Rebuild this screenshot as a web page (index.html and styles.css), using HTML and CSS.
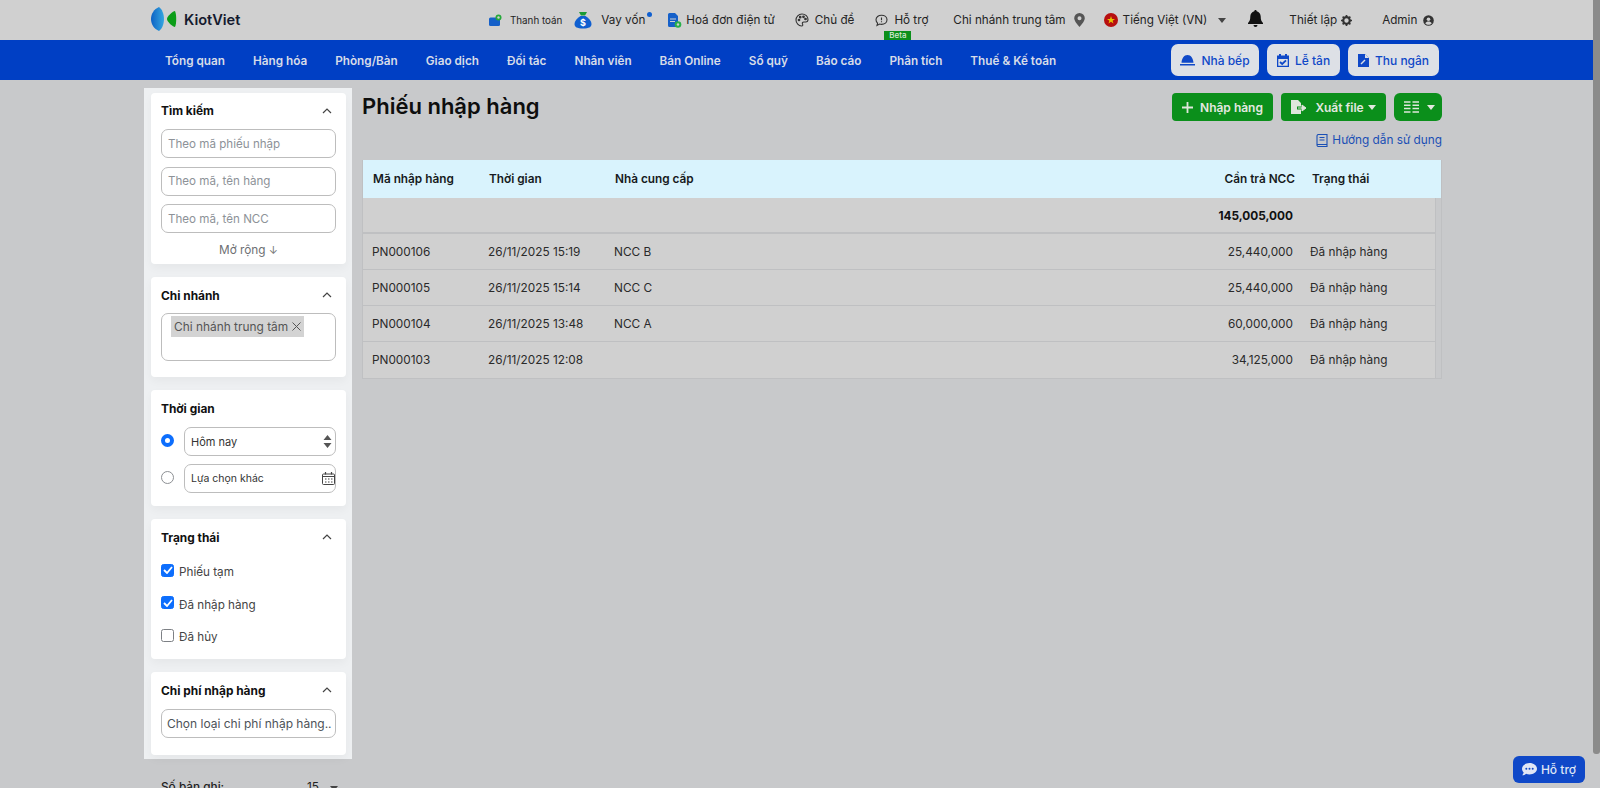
FILE: index.html
```html
<!DOCTYPE html>
<html lang="vi">
<head>
<meta charset="utf-8">
<title>Phiếu nhập hàng</title>
<link rel="stylesheet" href="styles.css">
</head>
<body>
<div class="app">
  <header class="topbar">
    <div class="shell topbar-in">
      <a class="logo">
        <svg width="26" height="26" viewBox="0 0 26 26"><defs><linearGradient id="lg" x1="0" x2="1" y1="0" y2="0"><stop offset="0" stop-color="#0d62c4"/><stop offset="1" stop-color="#35a6e0"/></linearGradient></defs><path d="M8 1C3 3 0 8 0 13s3 10 8 12c3-2 5-7 5-12S11 3 8 1z" fill="url(#lg)"/><path d="M24 5c-1.800 0-8 5-8 8s6.200 8 8 8c1-2 1.200-5 1.200-8s-.2-6-1.200-8z" fill="#0b9d18"/></svg>
        <span>KiotViet</span>
      </a>
      <nav class="tools">
        <a class="tool t-pay"><svg width="13" height="13" viewBox="0 0 13 13"><rect x="0" y="3.500" width="11" height="8.500" rx="1.500" fill="#1560c9"/><circle cx="9.500" cy="3.500" r="3" fill="#26a83a"/><circle cx="9.500" cy="3.500" r="1.200" fill="#d0d0d0"/></svg><span class="small">Thanh toán</span></a>
        <a class="tool t-loan"><svg width="18" height="18" viewBox="0 0 18 18"><path d="M5 1h8l-2 3.500H7z" fill="#1a9b35"/><path d="M6.500 5h5C15 7 17.500 10 17.500 13c0 3-2.500 4.500-8.500 4.500S.5 16 .5 13c0-3 2.500-6 6-8z" fill="#0f5fd0"/><text x="9" y="14.500" text-anchor="middle" class="dollar">$</text></svg><span>Vay vốn</span><i class="dot"></i></a>
        <a class="tool t-inv"><svg width="15" height="15" viewBox="0 0 15 15"><path d="M1 1.500A1.500 1.500 0 0 1 2.500 0H8l3 3v11H2.500A1.500 1.500 0 0 1 1 12.500z" fill="#1560c9"/><path d="M3 6h6M3 8.500h5" stroke="#d0d0d0"/><circle cx="11" cy="11.500" r="3.300" fill="#28b04a"/><circle cx="11" cy="11.500" r="1.200" fill="#d0d0d0"/></svg><span>Hoá đơn điện tử</span></a>
        <a class="tool t-theme"><svg width="14" height="14" viewBox="0 0 14 14" fill="none" stroke="#333" stroke-width="1.100"><path d="M7 1C3.500 1 1 3.700 1 7s2.700 6 5.500 6c1.500 0 1.500-1 1-2-.5-1 0-2 1.300-2h2C12.200 9 13 8 13 6.500 13 3.500 10.500 1 7 1z"/><circle cx="4" cy="7" r=".8" fill="#333"/><circle cx="5.200" cy="4.200" r=".8" fill="#333"/><circle cx="8.500" cy="3.800" r=".8" fill="#333"/><circle cx="10.500" cy="6" r=".8" fill="#333"/></svg><span>Chủ đề</span></a>
        <a class="tool t-help"><svg width="13" height="13" viewBox="0 0 13 13" fill="none" stroke="#333" stroke-width="1.100"><path d="M6.500 1.200c3.100 0 5.500 2 5.500 4.600s-2.400 4.600-5.500 4.600c-.7 0-1.300-.1-1.900-.3L2 11.500l.6-2.300C1.600 8.300 1 7.100 1 5.800c0-2.600 2.400-4.600 5.500-4.600z"/><path d="M6.500 3.500v2.800M6.500 7.300v.9"/></svg><span>Hỗ trợ</span><b class="beta">Beta</b></a>
        <a class="tool t-branch"><span>Chi nhánh trung tâm</span><svg width="11" height="14" viewBox="0 0 11 14"><path fill-rule="evenodd" d="M5.500 0A5.300 5.300 0 0 0 .2 5.300C.2 8.500 5.500 14 5.500 14s5.300-5.500 5.300-8.700A5.300 5.300 0 0 0 5.500 0zm0 7.300a2 2 0 1 1 0-4 2 2 0 0 1 0 4z" fill="#555"/></svg></a>
        <a class="tool t-lang"><svg width="14" height="14" viewBox="0 0 14 14"><circle cx="7" cy="7" r="7" fill="#b70f0f"/><path d="M7 3l1 2.900h3L8.600 7.700l.9 2.900L7 8.800l-2.500 1.800.9-2.900L3 5.900h3z" fill="#e8c200"/></svg><span>Tiếng Việt (VN)</span><i class="caret dark"></i></a>
        <a class="tool t-bell"><svg width="15" height="17" viewBox="0 0 15 17"><path d="M7.500 0C6.700 0 6.300.6 6.300 1.300 3.800 1.900 2.300 4 2.300 6.500c0 3.500-.8 4.800-2.300 6.500v1h15v-1c-1.500-1.700-2.300-3-2.300-6.500 0-2.500-1.500-4.600-4-5.200C8.700.6 8.300 0 7.500 0zM5.500 15a2 2 0 0 0 4 0z" fill="#111"/></svg></a>
        <a class="tool t-set"><span>Thiết lập</span><svg width="11" height="11" viewBox="0 0 10 10"><circle cx="5" cy="5" r="3" fill="none" stroke="#333" stroke-width="2"/><path d="M5 0v2M5 8v2M0 5h2M8 5h2M1.500 1.500l1.300 1.300M7.200 7.200l1.300 1.300M8.500 1.500L7.200 2.800M2.800 7.200L1.500 8.500" stroke="#333" stroke-width="1.500"/></svg></a>
        <a class="tool t-admin"><span>Admin</span><svg width="11" height="11" viewBox="0 0 11 11"><circle cx="5.500" cy="5.500" r="5.300" fill="#333"/><circle cx="5.500" cy="4.200" r="1.800" fill="#d0d0d0"/><path d="M2.300 8.500c.6-1.300 1.800-1.900 3.200-1.900s2.600.6 3.200 1.900c-.8.800-2 1.300-3.200 1.300s-2.400-.5-3.200-1.300z" fill="#d0d0d0"/></svg></a>
      </nav>
    </div>
  </header>

  <div class="navbar">
    <div class="shell navbar-in">
      <ul class="menu">
        <li>Tổng quan</li><li>Hàng hóa</li><li>Phòng/Bàn</li><li>Giao dịch</li><li>Đối tác</li><li>Nhân viên</li><li>Bán Online</li><li>Sổ quỹ</li><li>Báo cáo</li><li>Phân tích</li><li>Thuế &amp; Kế toán</li>
      </ul>
      <div class="quick">
        <a class="qbtn q1"><svg width="15" height="11" viewBox="0 0 15 11"><path d="M7.500 0C4 0 1.800 3.500 1.500 7.800h12C13.200 3.500 11 0 7.500 0zM0 9h15v1.600H0z" fill="#0f48c8"/></svg>Nhà bếp</a>
        <a class="qbtn q2"><svg width="12" height="13" viewBox="0 0 12 13"><path d="M2 0h2v1.500h4V0h2v1.500h2V13H0V1.500h2zM1.300 5v6.700h9.400V5z" fill="#0f48c8" fill-rule="evenodd"/><path d="M3 8l2.200 2L9 6.300" stroke="#0f48c8" stroke-width="1.800" fill="none"/></svg>Lễ tân</a>
        <a class="qbtn q3"><svg width="11" height="13" viewBox="0 0 11 13"><path d="M0 0h7l4 4v9H0z" fill="#0f48c8"/><path d="M7 0l4 4H7z" fill="#dde0e6"/><path d="M3 10l4-4" stroke="#dde0e6" stroke-width="1.500"/></svg>Thu ngân</a>
      </div>
    </div>
  </div>

  <div class="shell content">
    <aside class="side">
      <div class="side-panel">
        <section class="card c-search">
          <header class="card-h"><h3>Tìm kiếm</h3><svg class="chev" width="10" height="6" viewBox="0 0 10 6"><path d="M1 5l4-4 4 4" fill="none" stroke="#444" stroke-width="1.200"/></svg></header>
          <div class="stack">
            <div class="field ph">Theo mã phiếu nhập</div>
            <div class="field ph">Theo mã, tên hàng</div>
            <div class="field ph">Theo mã, tên NCC</div>
          </div>
          <div class="more">Mở rộng <span class="arr">↓</span></div>
        </section>
        <section class="card c-branch">
          <header class="card-h"><h3>Chi nhánh</h3><svg class="chev" width="10" height="6" viewBox="0 0 10 6"><path d="M1 5l4-4 4 4" fill="none" stroke="#444" stroke-width="1.200"/></svg></header>
          <div class="tagbox"><span class="tag">Chi nhánh trung tâm <svg width="9" height="9" viewBox="0 0 9 9"><path d="M.5.5l8 8M8.500.5l-8 8" stroke="#555" stroke-width="1"/></svg></span></div>
        </section>
        <section class="card c-time">
          <header class="card-h"><h3>Thời gian</h3></header>
          <div class="radio-row"><i class="radio on"></i><div class="field sel"><span>Hôm nay</span><svg width="9" height="13" viewBox="0 0 9 13"><path d="M4.500 0l4 5H.5zM4.500 13l-4-5h8z" fill="#555"/></svg></div></div>
          <div class="radio-row r2"><i class="radio"></i><div class="field sel s2"><span>Lựa chọn khác</span><svg width="13" height="13" viewBox="0 0 13 13" fill="none" stroke="#444"><rect x=".5" y="2" width="12" height="10.500" rx="1"/><path d="M.5 4.500h12M3.500 0v2.500M9.500 0v2.500" stroke-width="1.200"/><path d="M3 7h1.500M6 7h1.500M9 7h1.500M3 10h1.500M6 10h1.500M9 10h1.500"/></svg></div></div>
        </section>
        <section class="card c-status">
          <header class="card-h"><h3>Trạng thái</h3><svg class="chev" width="10" height="6" viewBox="0 0 10 6"><path d="M1 5l4-4 4 4" fill="none" stroke="#444" stroke-width="1.200"/></svg></header>
          <label class="chk"><i class="box on"><svg width="10" height="8" viewBox="0 0 10 8"><path d="M1 4l3 3 5-6" fill="none" stroke="#fff" stroke-width="1.800"/></svg></i>Phiếu tạm</label>
          <label class="chk"><i class="box on"><svg width="10" height="8" viewBox="0 0 10 8"><path d="M1 4l3 3 5-6" fill="none" stroke="#fff" stroke-width="1.800"/></svg></i>Đã nhập hàng</label>
          <label class="chk"><i class="box"></i>Đã hủy</label>
        </section>
        <section class="card c-cost">
          <header class="card-h"><h3>Chi phí nhập hàng</h3><svg class="chev" width="10" height="6" viewBox="0 0 10 6"><path d="M1 5l4-4 4 4" fill="none" stroke="#444" stroke-width="1.200"/></svg></header>
          <div class="field cost">Chọn loại chi phí nhập hàng..</div>
        </section>
      </div>
      <div class="pager"><b>Số bản ghi:</b><span class="pg-r">15<i class="pgcaret"></i></span></div>
    </aside>

    <main class="main">
      <div class="head">
        <h1>Phiếu nhập hàng</h1>
        <div class="actions">
          <div class="btns">
            <a class="btn b-add"><svg width="11" height="11" viewBox="0 0 11 11"><path d="M5.500 0v11M0 5.500h11" stroke="#dfe6dc" stroke-width="1.800"/></svg>Nhập hàng</a>
            <a class="btn b-exp"><svg class="exp-ic" width="16" height="14" viewBox="0 0 16 14"><path d="M0 0h7l3 3v3.500H6v3h4V14H0z" fill="#dfe6dc"/><path d="M7 8h6M11 5l4 3-4 3z" stroke="#dfe6dc" fill="#dfe6dc"/></svg>Xuất file<i class="caret"></i></a>
            <a class="btn b-grid"><svg width="15" height="12" viewBox="0 0 15 12"><path d="M0 1h6.500M8.500 1H15M0 4.300h6.500M8.500 4.300H15M0 7.600h6.500M8.500 7.600H15M0 11h6.500M8.500 11H15" stroke="#dfe6dc" stroke-width="1.500"/></svg><i class="caret"></i></a>
          </div>
          <a class="guide"><svg width="12" height="13" viewBox="0 0 12 13" fill="none" stroke="#1a4fb5" stroke-width="1.100"><path d="M1 2a1.500 1.500 0 0 1 1.500-1.500H11v12H2.500A1.500 1.500 0 0 1 1 11zM1 10.500h10M3.500 3.500h5M3.500 6h5"/></svg>Hướng dẫn sử dụng</a>
        </div>
      </div>

      <div class="tablewrap">
        <table class="grid">
          <thead><tr><th class="c1">Mã nhập hàng</th><th class="c2">Thời gian</th><th class="c3">Nhà cung cấp</th><th class="c4">Cần trả NCC</th><th class="c5">Trạng thái</th><th class="c6"></th></tr></thead>
          <tbody>
            <tr class="total"><td></td><td></td><td></td><td class="num">145,005,000</td><td></td><td class="edge"></td></tr>
            <tr><td>PN000106</td><td>26/11/2025 15:19</td><td>NCC B</td><td class="num">25,440,000</td><td>Đã nhập hàng</td><td class="edge"></td></tr>
            <tr><td>PN000105</td><td>26/11/2025 15:14</td><td>NCC C</td><td class="num">25,440,000</td><td>Đã nhập hàng</td><td class="edge"></td></tr>
            <tr><td>PN000104</td><td>26/11/2025 13:48</td><td>NCC A</td><td class="num">60,000,000</td><td>Đã nhập hàng</td><td class="edge"></td></tr>
            <tr class="last"><td>PN000103</td><td>26/11/2025 12:08</td><td></td><td class="num">34,125,000</td><td>Đã nhập hàng</td><td class="edge"></td></tr>
          </tbody>
        </table>
      </div>
    </main>
  </div>

  <a class="support"><svg width="15" height="13" viewBox="0 0 15 13"><path d="M7.500 0C3.400 0 0 2.500 0 5.700c0 1.400.7 2.700 1.700 3.700-.3 1-.9 2-1.500 2.800 1.500 0 2.900-.6 3.900-1.400 1 .4 2.200.6 3.400.6 4.100 0 7.500-2.500 7.500-5.700S11.600 0 7.500 0z" fill="#dfe6f5"/><circle cx="4.300" cy="5.700" r="1" fill="#0f48c8"/><circle cx="7.500" cy="5.700" r="1" fill="#0f48c8"/><circle cx="10.700" cy="5.700" r="1" fill="#0f48c8"/></svg>Hỗ trợ</a>
  <div class="scroll-thumb"></div>
</div>
</body>
</html>
```
FILE: styles.css
```css
* { box-sizing: border-box; }
html, body { margin: 0; height: 100%; overflow: hidden; }
body { background: #c8c9cb; font-family: Inter, "Noto Sans", sans-serif; color: #1c1c1c; font-size: 11.8px; }
.app { height: 788px; overflow: hidden; position: relative; }
.shell { margin-left: 144px; width: 1298px; }

.topbar { height: 40px; background: #d0d0d0; margin-right: 7px; }
.topbar-in { display: flex; align-items: center; height: 40px; position: relative; }
.logo { display: flex; align-items: center; margin-left: 7px; gap: 7px; font-size: 14.600px; font-weight: 600; color: #141a2e; width: 90px; }
.logo svg { margin-top: -2px; }
.tools { display: flex; align-items: center; margin-left: 248px; font-size: 11.7px; color: #242424; height: 40px; }
.tool { display: flex; align-items: center; position: relative; height: 40px; }
.tool span { white-space: nowrap; }
.tool .small { font-size: 9.8px; }
.t-pay { gap: 8px; }
.t-loan { margin-left: 12px; gap: 9px; }
.t-inv { margin-left: 22px; gap: 4px; }
.t-theme { margin-left: 20px; gap: 6px; }
.t-help { margin-left: 21px; gap: 6px; }
.t-branch { margin-left: 25px; gap: 8px; }
.t-lang { margin-left: 19px; gap: 5px; }
.t-bell { margin-left: 22px; margin-top: -3px; }
.t-set { margin-left: 26px; gap: 4px; }
.t-admin { margin-left: 30px; gap: 6px; }
.dot { position: absolute; right: -7px; top: 12px; width: 5px; height: 5px; border-radius: 50%; background: #0f5fd0; }
.dollar { font: 700 9px Inter, sans-serif; fill: #fff; }
.beta { position: absolute; left: 9px; top: 31px; width: 27px; height: 9px; background: #0b8f1b; color: #d5e8d5; font-size: 8px; line-height: 9px; text-align: center; font-weight: 500; }
.caret { display: inline-block; width: 0; height: 0; border-left: 4.500px solid transparent; border-right: 4.500px solid transparent; border-top: 5px solid #e3e8e0; }
.caret.dark { border-top-color: #444; margin-left: 6px; }

.navbar { height: 40px; background: #003fc4; margin-right: 7px; }
.navbar-in { display: flex; align-items: center; height: 40px; justify-content: space-between; }
.menu { list-style: none; margin: 1px 0 0 21px; padding: 0; display: flex; gap: 28px; font-size: 11.75px; font-weight: 600; color: #d7dce8; }
.quick { display: flex; gap: 8px; margin-right: 3px; }
.qbtn { height: 32px; background: #dde0e6; border-radius: 7px; display: flex; align-items: center; justify-content: center; gap: 6px; color: #0f48c8; font-size: 12px; font-weight: 500; }
.q1 { width: 88px; }
.q2 { width: 73px; }
.q3 { width: 91px; }

.content { display: flex; align-items: flex-start; }
.side { width: 208px; flex: none; margin-top: 8px; }
.side-panel { background: #eef0f2; padding: 5px 6px 3px 7px; display: flex; flex-direction: column; gap: 13px; height: 671px; }
.card { background: #fff; border-radius: 4px; padding: 0 10px; box-shadow: 0 4px 10px rgba(0,0,0,.04); }
.card-h { height: 36px; display: flex; align-items: center; justify-content: space-between; }
.card-h h3 { margin: 0; font-size: 11.9px; font-weight: 700; color: #111; }
.chev { margin-right: 4px; }
.c-search { height: 171px; }
.c-search .card-h { height: 35px; }
.c-branch { height: 100px; }
.c-time { height: 116px; }
.c-status { height: 140px; }
.c-status .card-h { margin-bottom: 1px; }
.c-cost { height: 83px; }
.c-cost .card-h { margin-bottom: 1px; }
.stack { display: flex; flex-direction: column; gap: 8.500px; margin-top: 1px; }
.field { height: 29px; border: 1px solid #bdbdbd; border-radius: 7px; padding: 0 6px; display: flex; align-items: center; font-size: 12px; }
.ph { color: #8d9298; font-size: 11.6px; }
.more { text-align: center; color: #6d6f73; margin-top: 10px; font-size: 11.8px; }
.arr { color: #777; font-size: 11px; }
.tagbox { height: 48px; border: 1px solid #bdbdbd; border-radius: 7px; padding: 2px 9px; }
.tag { display: inline-flex; align-items: center; gap: 4px; height: 21px; background: #d3d3d3; color: #555; padding: 0 3px; font-size: 11.9px; }
.radio-row { display: flex; align-items: center; height: 29px; margin-top: 1px; }
.r2 { margin-top: 8px; }
.radio { width: 13px; height: 13px; border-radius: 50%; border: 1px solid #8d9094; flex: none; margin-right: 10px; background: #fff; margin-top: -2px; }
.radio.on { border: 4px solid #0d6efd; }
.sel { flex: 1; justify-content: space-between; padding-right: 3px; color: #333; font-size: 11px; }
.radio-row .sel { padding-left: 6px; }
.s2 { font-size: 10.500px; padding-right: 0; }
.chk { display: flex; align-items: center; height: 32.500px; gap: 5px; color: #444; font-size: 11.7px; }
.box { width: 13px; height: 13px; border-radius: 2.500px; border: 1px solid #7d8085; background: #fff; display: flex; align-items: center; justify-content: center; flex: none; margin-top: -4px; }
.box.on { background: #0d6efd; border-color: #0d6efd; }
.cost { color: #4d5258; padding-left: 5px; white-space: nowrap; overflow: hidden; }
.pager { display: flex; justify-content: space-between; padding: 21px 14px 0 17px; font-size: 11.8px; color: #222; }
.pager b { font-weight: 500; }
.pg-r { display: flex; align-items: flex-start; gap: 11px; }
.pgcaret { width: 0; height: 0; border-left: 4.500px solid transparent; border-right: 4.500px solid transparent; border-top: 5px solid #444; margin-top: 6px; }

.main { flex: 1; padding-left: 10px; min-width: 0; }
.head { display: flex; justify-content: space-between; align-items: flex-start; height: 80px; }
.head h1 { margin: 13px 0 0; font-size: 22px; line-height: 26px; font-weight: 600; color: #0e0e0e; }
.actions { display: flex; flex-direction: column; align-items: flex-end; padding-top: 13px; }
.btns { display: flex; gap: 8px; }
.btn { height: 28px; background: #0b8f1b; color: #e3e8e0; border-radius: 4px; display: flex; align-items: center; justify-content: center; font-size: 12px; font-weight: 600; }
.b-add { width: 101px; gap: 7px; }
.b-exp { width: 105px; gap: 4px; }
.exp-ic { margin-right: 4px; }
.b-grid { width: 48px; gap: 8px; border-radius: 6px; padding-left: 3px; }
.guide { display: flex; align-items: center; gap: 4px; margin-top: 12px; color: #1a4fb5; font-size: 11.8px; }

.tablewrap { border: 1px solid #bfc0c2; border-top: 0; width: 1080px; background: #d0d0d0; }
.grid { width: 1078px; border-collapse: collapse; table-layout: fixed; font-size: 11.8px; }
.grid th { height: 38px; background: #d9f3fd; font-weight: 600; text-align: left; color: #161a20; padding: 0 0 0 10px; font-size: 11.8px; }
.grid .c1 { width: 116px; }
.grid .c2 { width: 126px; }
.grid .c3 { width: 500px; }
.grid .c4 { width: 190px; text-align: right; padding: 0; }
.grid .c5 { width: 140px; padding-left: 17px; }
.grid .c6 { width: 6px; padding: 0; }
.grid td { height: 36px; border-bottom: 1px solid #bfc0c2; padding: 1px 0 0 9px; color: #2a2a2a; }
.grid td.num { text-align: right; padding: 1px 2px 0 0; }
.grid td:nth-child(5) { padding-left: 15px; }
.grid td.edge { border-left: 1px solid #bfc0c2; border-bottom: 0; padding: 0; background: #c8c9cb; }
.grid .last td { height: 37px; border-bottom: 0; }
.grid .total td { height: 35px; border-bottom: 2px solid #bfc0c2; font-weight: 700; color: #111; }
.grid .total td.edge { border-bottom: 0; }

.support { position: absolute; left: 1513px; top: 756px; width: 72px; height: 27px; background: #0f48c8; border-radius: 6px; color: #dfe6f5; display: flex; align-items: center; justify-content: center; gap: 4px; font-size: 12px; font-weight: 500; }
.scroll-thumb { position: absolute; right: 0; top: 0; width: 7px; height: 754px; background: #8b8b8b; border-radius: 0 0 3px 3px; }
```
